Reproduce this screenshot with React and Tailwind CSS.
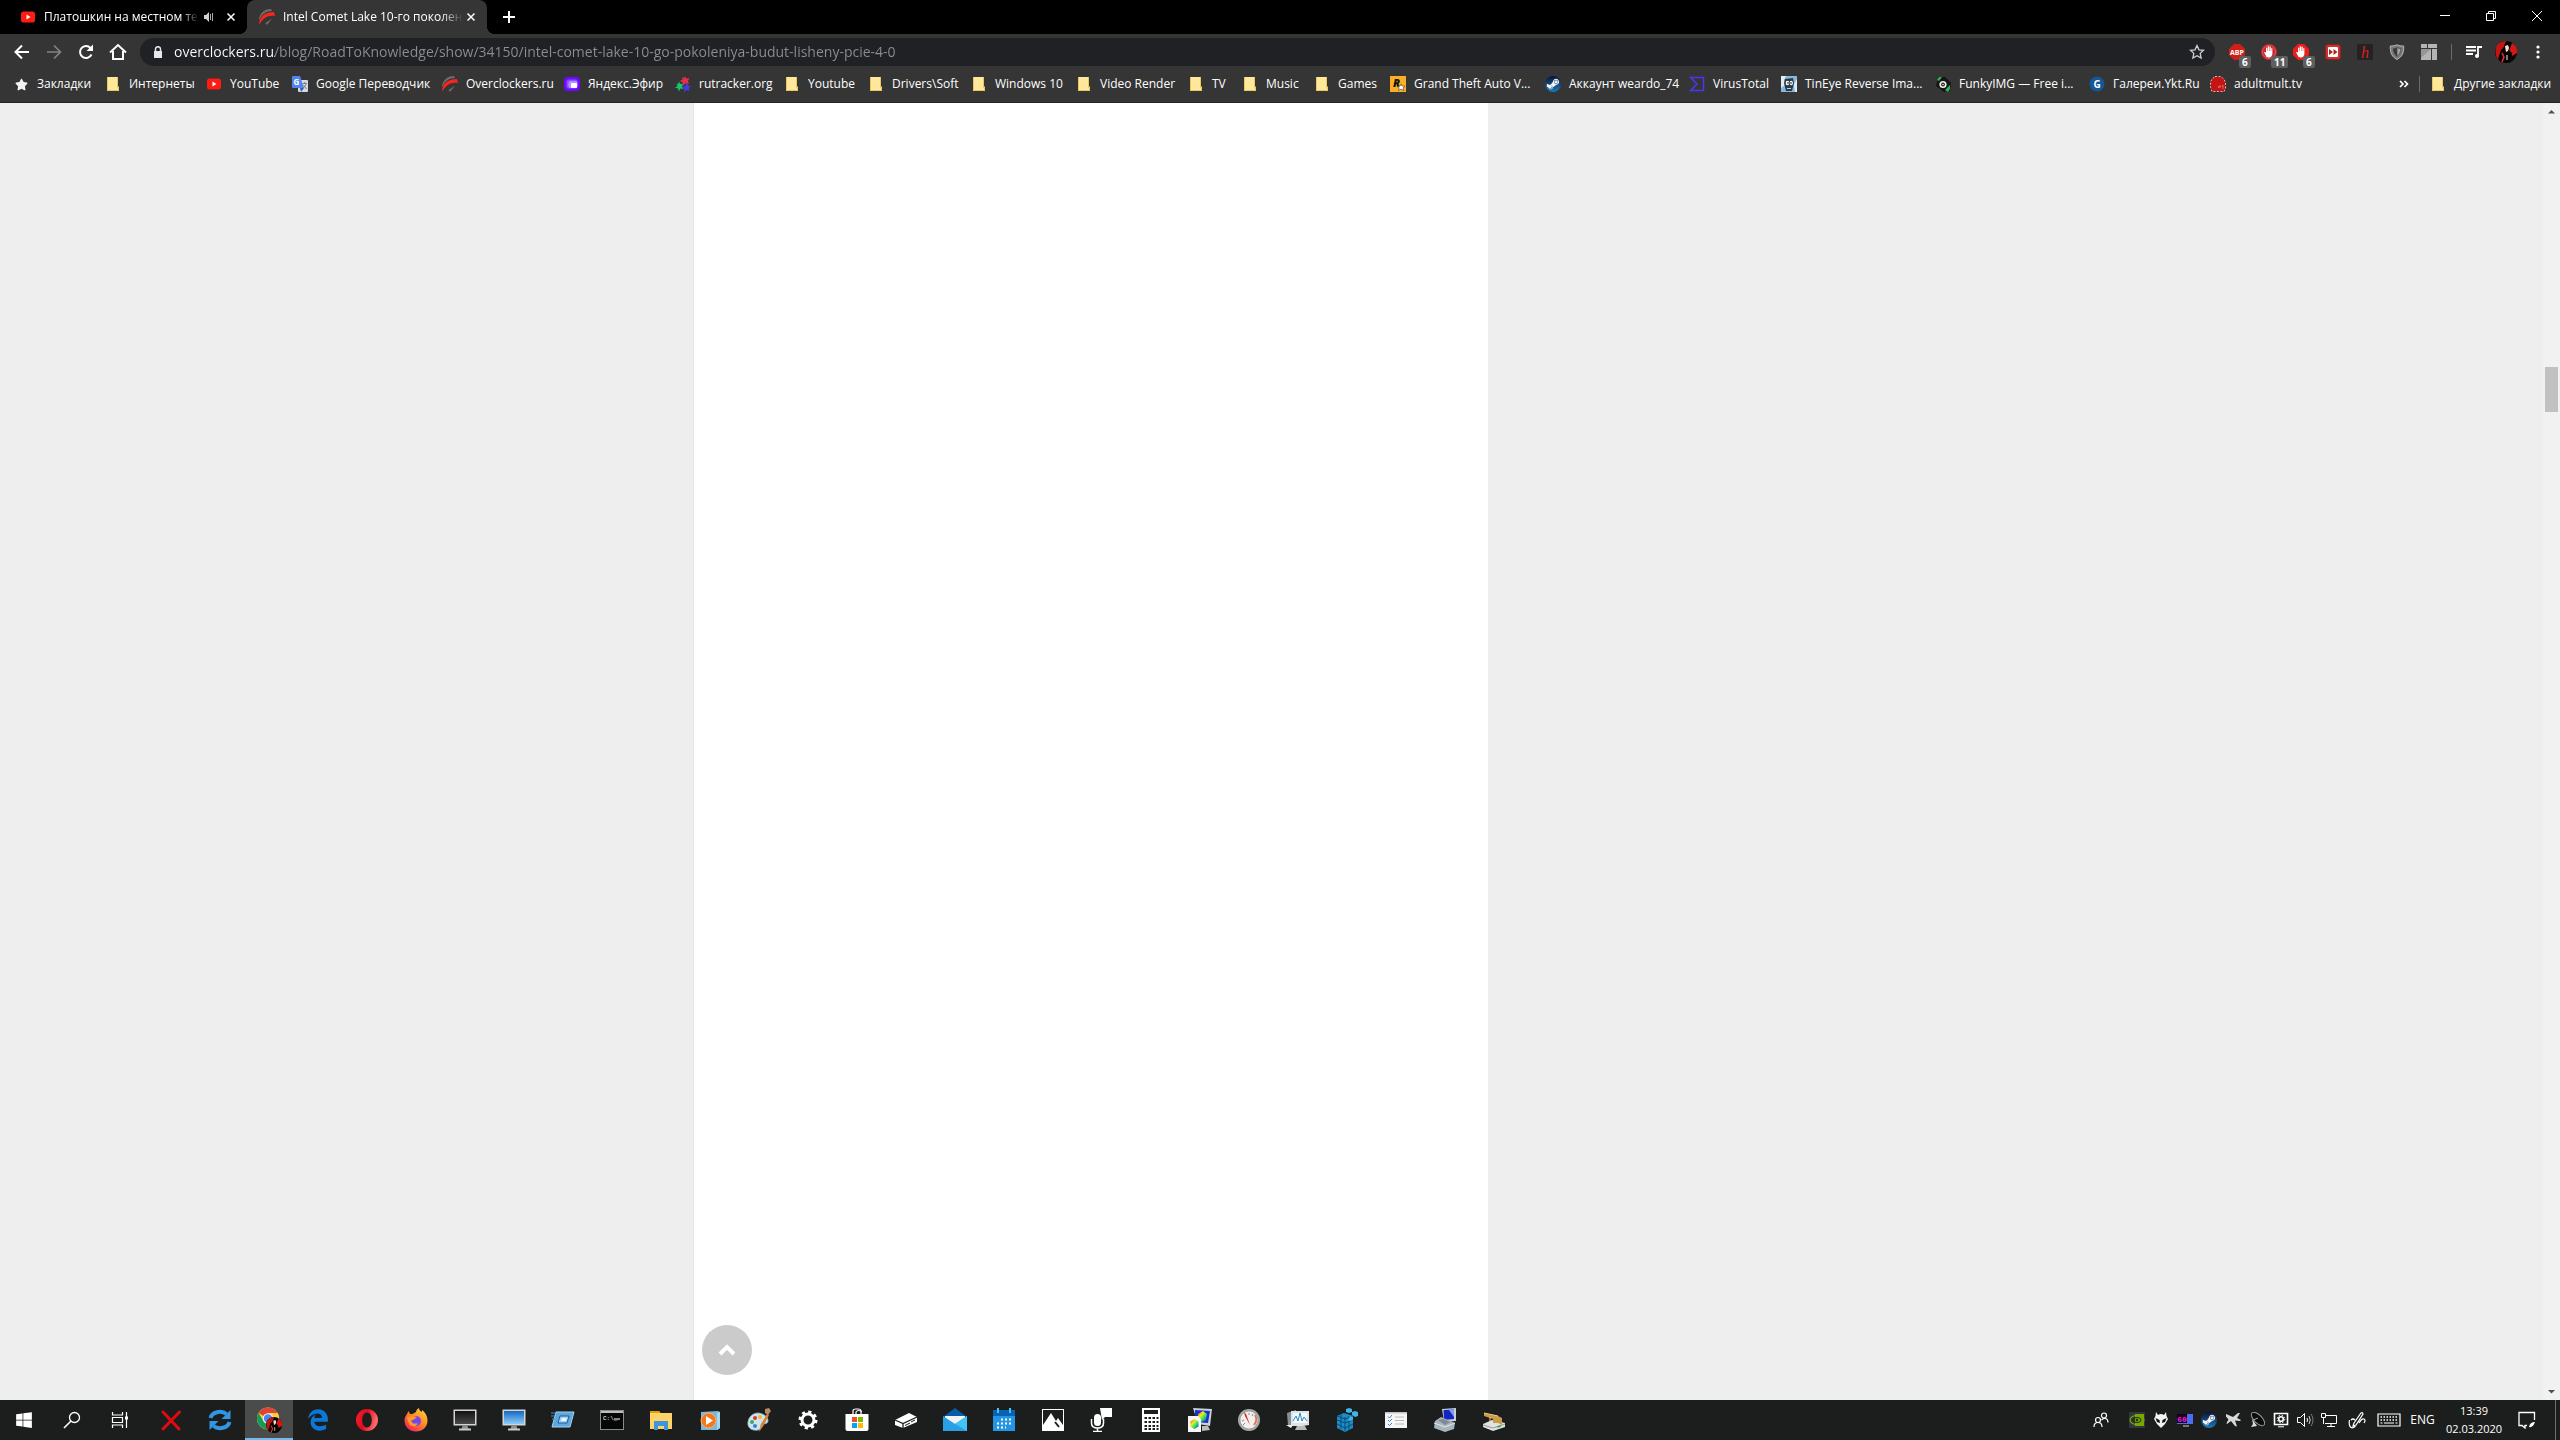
import React from "react";
import { FaEdgeLegacy, FaSteamSymbol, FaWindows, FaStar } from "react-icons/fa6";

const Svg = ({ s = 24, className = "", children, vb }) => (
  <svg width={s} height={s} viewBox={vb || `0 0 ${s} ${s}`} className={`shrink-0 ${className}`} fill="none" aria-hidden="true">
    {children}
  </svg>
);

/* ---------- favicons, 16px ---------- */
const YouTubeIcon = () => (
  <Svg s={16}>
    <rect x="1" y="2.500" width="14" height="11" rx="2.500" fill="#ff1a12" />
    <path d="M6.500 5.500v5l4-2.500z" fill="#fff" />
  </Svg>
);
const FolderIcon = () => (
  <Svg s={16}>
    <path d="M2 1h11v9l1 1v4H2z" fill="#ffe79b" />
    <path d="M2.500 1v13.500H13.500V11.500H12.500V1" stroke="#e9c85c" />
  </Svg>
);
const OverclockersIcon = () => (
  <Svg s={16}>
    <path d="M0 9C2 3 6 0 12 0l1 2C7 2 3 5 0 11z" fill="#6d6d6d" />
    <path d="M0 16C0 8 5 3 15 3l1 4C9 6 4 9 0 16z" fill="#f5261d" />
    <path d="M7 14l6-4.500-4 5z" fill="#777" />
    <circle cx="8" cy="14.300" r="1.300" fill="#666" />
  </Svg>
);
const GoogleTranslateIcon = () => (
  <Svg s={16}>
    <rect x="6" y="4" width="10" height="12" rx="1" fill="#d6d8db" />
    <path d="M1 0h7l4 12H1a1 1 0 01-1-1V1a1 1 0 011-1z" fill="#5185ec" />
    <path d="M8 12h4l-3 4z" fill="#3358bd" />
    <text x="1.500" y="9" fontSize="8" fontWeight="bold" fill="#fff" fontFamily="Open Sans">G</text>
    <path d="M10.500 7.500H15M12.700 6v1.500M14 8c-.5 2-1.500 3-3 4M11.500 9l3 4" stroke="#687a8c" strokeWidth=".9" />
  </Svg>
);
const YandexIcon = () => (
  <Svg s={16}>
    <rect x="0" y="1" width="16" height="14" rx="4" fill="#6c0bff" />
    <rect x="2.500" y="3.500" width="11" height="9" rx="2.500" fill="#8d4dff" />
    <rect x="4.500" y="5" width="9" height="7" rx="2" fill="#b68cff" />
    <rect x="7" y="7" width="6" height="5" rx="1" fill="#fff" />
  </Svg>
);
const RutrackerIcon = () => (
  <Svg s={16}>
    <path d="M10 0l1 2.500 3.500-.5-1.500 3 1 3-3.500-.5L8 9.500 7.500 6.500 5 5l2.500-1.500L7 1l2 1z" fill="#e0304a" />
    <path d="M4 5.500l1.500 2.500L8 8 7 10.500l1.500 2.500-3-.5L4 15.500 3 12.500 0 11.500 2.500 10 1.500 7.500 3.500 8z" fill="#15c66e" />
    <path d="M12.500 6.500l.7 2.700 2.800 1-2.200 1.800.7 3.300-2.700-1.300L9 16l.2-3.500L7 10.500l3-.5z" fill="#4b37e0" />
  </Svg>
);
const RockstarIcon = () => (
  <Svg s={16}>
    <rect width="16" height="16" fill="#fcaf24" />
    <text x="3" y="11" fontSize="11" fontWeight="900" fontStyle="italic" fill="#111" fontFamily="Open Sans">R</text>
    <path d="M11 8l1 2 3 .3-2 1.600.8 2.700-2.800-1.400-2.500 1.400.7-2.800L7 10.500l3-.3z" fill="#fff" stroke="#222" strokeWidth=".5" />
  </Svg>
);
const SteamIcon = () => (
  <span className="flex size-4 shrink-0 items-center justify-center rounded-full bg-linear-to-b from-[#0a1538] to-[#1b7cb8]">
    <FaSteamSymbol size={14} color="#f1f5f9" />
  </span>
);
const VirusTotalIcon = () => (
  <Svg s={16}>
    <path d="M1.500 1.500H14.500V14.500H1.500L8 8z" stroke="#4b36f5" strokeWidth="1.500" />
  </Svg>
);
const TinEyeIcon = () => (
  <Svg s={16}>
    <rect width="16" height="16" fill="#86b8d8" />
    <path d="M0 0h5L3 4 5 8 0 12zM16 3l-3 5 1 8h2z" fill="#e2edf2" />
    <path d="M4 3l8-1 1 5-2 8H5L3 7z" fill="#27394b" />
    <ellipse cx="6.500" cy="7" rx="1.800" ry="2.300" fill="#fff" />
    <ellipse cx="10.300" cy="7" rx="1.600" ry="2.300" fill="#fff" />
    <path d="M7 6v2M10 6v2" stroke="#111" />
    <path d="M6 12.500h4" stroke="#bcd3df" />
  </Svg>
);
const FunkyIcon = () => (
  <Svg s={16}>
    <path d="M3 1l7 0 6 6-1 8-6 1-8-6z" fill="#151515" />
    <path d="M2 4l2-3 3 0-3 4zM10 14l5-5v4l-2 3z" fill="#28b84d" />
    <circle cx="8" cy="8.500" r="3.600" fill="#eee" />
    <circle cx="8" cy="8.500" r="1.900" fill="#222" />
    <circle cx="8" cy="8.500" r=".8" fill="#eee" />
  </Svg>
);
const YktIcon = () => (
  <Svg s={16}>
    <circle cx="8" cy="8" r="7.500" fill="#125796" />
    <text x="8" y="11.500" fontSize="10" fontWeight="bold" fill="#fff" textAnchor="middle" fontFamily="Open Sans">G</text>
  </Svg>
);
const AdultIcon = () => (
  <Svg s={16}>
    <path d="M5 .5h6l3 3 1.500 3v6l-1.500 3H2L.5 11V6L2 3z" fill="#c41414" stroke="#e8dada" strokeWidth=".8" strokeDasharray="2 1.500" />
    <path d="M8 11h1M10 9.500v2M12 10h1.500M13 11.500v1" stroke="#f0baba" strokeWidth=".9" />
  </Svg>
);

const bookmarks = [
  ["Закладки", () => <FaStar size={13} className="mx-px shrink-0" color="#f1f3f4" />, "w-[91px]"],
  ["Интернеты", FolderIcon, "w-[101px]"],
  ["YouTube", YouTubeIcon, "w-[86px]"],
  ["Google Переводчик", GoogleTranslateIcon, "w-[150px]"],
  ["Overclockers.ru", OverclockersIcon, "w-[122px]"],
  ["Яндекс.Эфир", YandexIcon, "w-[111px]"],
  ["rutracker.org", RutrackerIcon, "w-[109px]"],
  ["Youtube", FolderIcon, "w-[84px]"],
  ["Drivers\\Soft", FolderIcon, "w-[103px]"],
  ["Windows 10", FolderIcon, "w-[105px]"],
  ["Video Render", FolderIcon, "w-[112px]"],
  ["TV", FolderIcon, "w-[54px]"],
  ["Music", FolderIcon, "w-[72px]"],
  ["Games", FolderIcon, "w-[76px]"],
  ["Grand Theft Auto V...", RockstarIcon, "w-[155px]"],
  ["Аккаунт weardo_74", SteamIcon, "w-[144px]"],
  ["VirusTotal", VirusTotalIcon, "w-[92px]"],
  ["TinEye Reverse Ima...", TinEyeIcon, "w-[154px]"],
  ["FunkyIMG — Free i...", FunkyIcon, "w-[154px]"],
  ["Галереи.Ykt.Ru", YktIcon, "w-[121px]"],
  ["adultmult.tv", AdultIcon, "w-[104px]"],
];

/* ---------- window chrome ---------- */
const CloseGlyph = ({ s = 8 }) => (
  <Svg s={s} vb="0 0 8 8"><path d="M.5 .5l7 7M7.500 .5l-7 7" stroke="#fff" strokeWidth="1.500" /></Svg>
);

const Tab = ({ icon: Icon, title, active, audio }) => (
  <div className={`relative flex h-full items-center pr-2 pl-3 ${active ? "w-60 rounded-t-lg bg-[#353535]" : "w-[239px]"}`}>
    {active && (
      <>
        <span className="absolute -left-2 bottom-0 size-2 bg-[radial-gradient(circle_at_0_0,transparent_8px,#353535_8px)]" />
        <span className="absolute -right-2 bottom-0 size-2 bg-[radial-gradient(circle_at_100%_0,transparent_8px,#353535_8px)]" />
      </>
    )}
    <Icon />
    <span className="ml-2 min-w-0 flex-1 overflow-hidden whitespace-nowrap [mask-image:linear-gradient(90deg,#000_88%,transparent)]">{title}</span>
    {audio && (
      <Svg s={12} className="ml-1 mr-2">
        <path d="M1 4h2l3-3v10L3 8H1z" fill="#d0d0d0" />
        <path d="M7.500 3v6M9.500 2v8" stroke="#aaa" />
      </Svg>
    )}
    <button aria-label="Закрыть вкладку" className="flex size-4 items-center justify-center"><CloseGlyph /></button>
  </div>
);

const IconButton = ({ label, children, className = "w-8" }) => (
  <button aria-label={label} className={`flex h-8 shrink-0 items-center justify-center ${className}`}>{children}</button>
);

const Badge = ({ children }) => (
  <span className="absolute -bottom-2 left-2.5 rounded-xs bg-[#5d5f61] px-[3px] text-[10px] leading-3 font-bold text-white">{children}</span>
);

const Octagon = ({ fill }) => <path d="M5 0h6l5 5v6l-5 5H5l-5-5V5z" fill={fill} />;
const Hand = () => <path d="M5 8V4q.7-1 1.300 0V7h.4V2.500q.7-1 1.400 0V7h.4V3q.7-1 1.300 0v4h.4V4.500q.7-1 1.200 0V10q-.5 3.500-3.500 3.500T4.500 11L3 8.500q.8-1 1.500 0z" fill="#fff" />;

const AvatarArt = () => (
  <>
    <circle cx="11" cy="11" r="11" fill="#080404" />
    <path d="M1 6C3 2 7 0 11 0L9 5 8 12 4 20Q-1 14 1 6z" fill="#c0160f" />
    <path d="M17 2q6 4 5 10l-5 3-3-5z" fill="#d21a12" />
    <path d="M10 5l3-1 1 3-1 3-2 1z" fill="#f1ded8" />
    <path d="M6 9l3-3 1 6-4 9-3-3zM14 9l3 3-1 9-5 1-1-7z" fill="#080404" />
    <path d="M7 12l2 4-2 5" stroke="#e9322a" strokeWidth="1.500" />
    <path d="M12 14v5" stroke="#eee" />
  </>
);

const extensions = [
  ["Adblock Plus", <><Octagon fill="#cf1f17" /><text x="8" y="11" fontSize="7" fontWeight="bold" fill="#fff" textAnchor="middle" fontFamily="Open Sans">ABP</text></>, "6"],
  ["Блокировщик", <><circle cx="8" cy="8" r="8" fill="#c9262d" /><circle cx="8" cy="8" r="6.500" stroke="#e06a6e" strokeWidth=".7" /><Hand /></>, "11"],
  ["AdBlock", <><Octagon fill="#f01c1c" /><Hand /></>, "6"],
  ["Перемотка", <><rect x=".5" y=".5" width="15" height="15" rx="2.500" fill="#c9322e" stroke="#8e2020" /><rect x="3" y="3" width="10" height="10" rx="1" fill="#fff" /><path d="M4 5l4 3-4 3zM8.500 5l4 3-4 3z" fill="#b31f1c" /></>],
  ["h", <><rect width="16" height="16" rx="1" fill="#232323" /><text x="8" y="13.500" fontSize="16" fontStyle="italic" fill="#d8201c" textAnchor="middle" fontFamily="Liberation Serif">h</text></>],
  ["Защита", <><path d="M8 .8C5.500 2 3 2 1.300 2 1 9 3 13 8 15.400 13 13 15 9 14.700 2 13 2 10.500 2 8 .8z" fill="#77797b" stroke="#b7b9bb" /><path d="M4 4.500q2.500 0 4-1v9Q4 9.500 4 4.500z" fill="#3a3a3a" /><path d="M8 3.500q1.500 1 4 1 0 5-4 8z" fill="#a5a7a9" stroke="#444" strokeWidth=".7" /></>],
  ["Панель", <><path d="M0 0h6v4H0zM7 0h9v4H7zM0 5h10v11H0zM11 5h5v11h-5z" fill="#b4b4b4" /><path d="M10 5L0 14V5z" fill="#969696" /></>],
];

/* ---------- taskbar icons, 24px ---------- */
const Monitor = ({ a, b, id }) => (
  <Svg>
    <defs><linearGradient id={id} x1="0" y1="0" x2="0" y2="1"><stop stopColor={a} /><stop offset="1" stopColor={b} /></linearGradient></defs>
    <rect x=".5" y="1.500" width="23" height="16" fill="#d4d4d4" />
    <rect x="2" y="3" width="20" height="13" fill={`url(#${id})`} />
    <path d="M9.500 17.500h5l1 3.500h-7z" fill="#8e8e8e" /><path d="M6 20.500h12v2H6z" fill="#c9c9c9" />
  </Svg>
);

const taskbar = [
  ["Закрыть", <Svg><path d="M4 4l16 17M20.500 4L4 21" stroke="#e20a12" strokeWidth="3" strokeLinecap="round" /></Svg>],
  ["Обновить", <Svg><path d="M2.500 10A9.500 7.500 0 0118.500 6" stroke="#3196e4" strokeWidth="4" /><path d="M22.500 2v9h-9z" fill="#3196e4" /><path d="M21.500 14a9.500 7.500 0 01-16 4" stroke="#3196e4" strokeWidth="4" /><path d="M1.500 22v-9h9z" fill="#3196e4" /></Svg>],
  ["Chrome", (
    <Svg s={28}>
      <circle cx="13" cy="13.500" r="11" fill="#ffcd40" />
      <path d="M13 13.500L3.500 8A11 11 0 0122.600 8H13z" fill="#dc4437" />
      <path d="M3.500 8A11 11 0 0013 24.500L17 16 8.500 16z" fill="#149c57" />
      <path d="M22.600 8H13l4.800 8.200L13 24.500A11 11 0 0022.600 8z" fill="#ffcd40" />
      <circle cx="13" cy="13.500" r="5.300" fill="#f3f3f3" /><circle cx="13" cy="13.500" r="4.200" fill="#4788f0" />
      <g transform="translate(11 12) scale(.73)"><AvatarArt /></g>
    </Svg>
  )],
  ["Edge", <FaEdgeLegacy size={22} color="#0a78d6" />],
  ["Opera", (
    <Svg>
      <defs><linearGradient id="op" x1="0" y1="0" x2="1" y2=".3"><stop stopColor="#ff1b2d" /><stop offset=".5" stopColor="#e00c20" /><stop offset="1" stopColor="#ff6a6a" /></linearGradient></defs>
      <path fillRule="evenodd" d="M12 1a11 11 0 100 22 11 11 0 000-22zm0 3.500c2.900 0 4.800 3.300 4.800 7.500s-1.900 7.500-4.800 7.500S7.200 16.200 7.200 12 9.100 4.500 12 4.500z" fill="url(#op)" />
    </Svg>
  )],
  ["Firefox", (
    <Svg>
      <defs><linearGradient id="fx" x1="1" y1="0" x2=".2" y2="1"><stop stopColor="#ffe14a" /><stop offset=".5" stopColor="#ff8a22" /><stop offset="1" stopColor="#f21d63" /></linearGradient></defs>
      <path d="M3 6l1.500-3L6 6l2.500 0L12 4c0-2 1.500-3 3-4 0 2 1 3 3 4 0-1 0-1-.2-2C21 4 23.500 8 23.500 12.500 23.500 19 18.500 23.500 12 23.500S.5 19 .5 12.500C.5 10 1.500 8 3 6z" fill="url(#fx)" />
      <circle cx="12" cy="13" r="5" fill="#7647e8" /><path d="M3 9l6-1 4 1-3 2.500-3 1 2 3 5 0-3 3-5-1-2-4z" fill="#ff9a27" />
    </Svg>
  )],
  ["Компьютер", <Monitor a="#111" b="#4a4a4a" id="m1" />],
  ["Рабочий стол", <Monitor a="#1468c0" b="#8ccbfa" id="m2" />],
  ["Выполнить", <Svg><path d="M5 4h18l-4 15H1z" fill="#5ea6de" stroke="#a5d4f4" /><path d="M9 8h9l-2 7H7z" fill="#9bd0f5" stroke="#205b9b" /><path d="M11 10h5l-1 3h-5z" fill="#e8f6ff" /><path d="M0 5h5M0 8h4M1 11h3" stroke="#4e8cb9" /></Svg>],
  ["Командная строка", <Svg><rect x=".5" y="2.500" width="23" height="19" fill="#060606" stroke="#8a8a8a" /><path d="M1 4h22" stroke="#bdbdbd" strokeWidth="2" /><text x="3" y="12" fontSize="6" fill="#fff" fontFamily="Liberation Mono">C:\_</text><path d="M14 11h6" stroke="#fff" /></Svg>],
  ["Проводник", <Svg><path d="M1 3h9l1.500 2H23v16H1z" fill="#ffd366" /><path d="M1 3h9l1 2H1z" fill="#e3a008" /><path d="M5 13h14v9h-4v-4H9v4H5z" fill="#3f95dc" /></Svg>],
  ["Медиаплеер", <Svg><path d="M3 4l17-1 2 1v16l-3 2H3z" fill="#76b9dc" /><path d="M19 5l3-1v16l-3 2z" fill="#a9d8ec" /><circle cx="10.500" cy="12.500" r="7.500" fill="#f3771d" stroke="#f7b47c" /><path d="M8 8v9l7-4.500z" fill="#fff" /></Svg>],
  ["Paint", <Svg><path d="M1 14C2 7 9 3 15 6c4 1 8 6 5 9-2 2-5-1-6 1 0 2 1 5-3 6C5 23 0 20 1 14z" fill="#cfe4f3" stroke="#8db7d1" strokeWidth=".8" /><circle cx="5" cy="14" r="2" fill="#41a94a" /><circle cx="8" cy="10" r="2" fill="#e2342c" /><circle cx="13" cy="9" r="2" fill="#f3b92c" /><circle cx="8" cy="18" r="2" fill="#3684cf" /><path d="M12 24l2-8 6-10 2 1-5 10z" fill="#d98435" /><path d="M18 1l4-1 2 3-3 4-3-2z" fill="#b98b62" /></Svg>],
  ["Параметры", <Svg><circle cx="12" cy="12" r="6" stroke="#fff" strokeWidth="3" /><circle cx="12" cy="12" r="8" stroke="#fff" strokeWidth="3" strokeDasharray="3.100 3.180" /></Svg>],
  ["Microsoft Store", <Svg><path d="M.5 6h23v15q0 2-2 2H2.500q-2 0-2-2z" fill="#fff" /><path d="M8 6V3q0-2 3-2h2q3 0 3 2v3M11 6V4q2-3 6 0" stroke="#fff" strokeWidth="1.200" /><path d="M7 9h5v5H7z" fill="#f25022" /><path d="M13 9h5v5h-5z" fill="#7fba00" /><path d="M7 15h5v5H7z" fill="#00a4ef" /><path d="M13 15h5v5h-5z" fill="#ffb900" /></Svg>],
  ["Диск", <Svg><path d="M1 12L15 5l8 4v5L9 20l-8-3z" fill="#fff" /><path d="M1 12l8 3.500L23 9M9 15.500V20" stroke="#1c1e1d" strokeWidth="1.300" /><path d="M11 17.500l5-2.500M17 14l4-2" stroke="#1c1e1d" /></Svg>],
  ["Почта", <Svg><path d="M0 9l12-9 12 9z" fill="#0a5aa9" /><path d="M2 8h20v8H2z" fill="#f1f4f6" /><path d="M0 8l12 8L24 8v15H0z" fill="#2a9fe6" /><path d="M24 8v15L9 14l3 2z" fill="#40c4f5" /></Svg>],
  ["Календарь", <Svg><path d="M1 2h22v21H1z" fill="#2296e3" /><path d="M1 2h22v6H1z" fill="#0c62b2" /><path d="M6 0v5M18 0v5" stroke="#43c6ee" strokeWidth="2" /><path d="M9 11.500h12M5 15.500h16M5 19.500h9" stroke="#fff" strokeWidth="2" strokeDasharray="2 2" /></Svg>],
  ["Фотографии", <Svg><path d="M1 1h22v22H1z" fill="#fff" /><path d="M2 2h20v15l-5-7-2 3-5-8-8 12z" fill="#1c1e1d" /><path d="M14 14l4 5" stroke="#1c1e1d" strokeWidth="2" /></Svg>],
  ["Диктофон", <Svg><rect x="4" y="6" width="7" height="12" rx="3.500" fill="#fff" /><path d="M1.500 11v4q0 5 6 5t6-5v-4M7.500 20v3M3 23.500h9" stroke="#fff" strokeWidth="1.500" /><path d="M10 0h12v9h-7l-3 3z" fill="#fff" /></Svg>],
  ["Калькулятор", <Svg><path d="M3 0h18v24H3z" fill="#fff" /><path d="M5 2h14v4H5z" fill="#1c1e1d" /><path d="M5.500 10h14M5.500 14h14M5.500 18h14M5.500 21h14" stroke="#1c1e1d" strokeWidth="1.800" strokeDasharray="2.500 1.500" /></Svg>],
  ["Цвет экрана", (
    <Svg>
      <defs><linearGradient id="rb" x1="0" y1="0" x2="1" y2="1"><stop stopColor="#f22" /><stop offset=".35" stopColor="#ee2" /><stop offset=".65" stopColor="#2d6" /><stop offset="1" stopColor="#22f" /></linearGradient></defs>
      <path d="M5 0l19 1-2 17-12-2z" fill="#c8d0da" /><path d="M7 2l15 1-2 12-13-1z" fill="#1c2fc8" /><path d="M15 3l4 3-1 6-4 2-4-3V6z" fill="url(#rb)" />
      <path d="M14 18h6l2 4-8 1z" fill="#bcbcbc" /><path d="M0 8h10l3 3v13H0z" fill="#f6f6f6" /><path d="M6.500 11l4 2.500v5L6.500 21l-4-2.500v-5z" fill="url(#rb)" />
    </Svg>
  )],
  ["Производительность", <Svg><circle cx="12" cy="12" r="11" fill="#a9a9a9" /><circle cx="12" cy="12" r="9" fill="#f2efec" stroke="#777" strokeWidth=".5" /><path d="M7 4l2 2 4 11-5-9z" fill="#cc241c" /><path d="M18 7q3 5-1 10" stroke="#d87a5b" strokeWidth="2" /><path d="M5 13l2-1M6 17l2-2M12 5v2M16 6l-1 2" stroke="#888" /></Svg>],
  ["Монитор ресурсов", <Svg><path d="M1 5l9-3v16H2z" fill="#8a8f92" /><path d="M5 3h18v14l-6 1H5z" fill="#dfe3e5" /><path d="M7 5h14v10H7z" fill="#f2f9fc" /><path d="M7 13l3-5 2 5 2-8 2 8 2-4 3 4" stroke="#2e87c4" /><path d="M11 18h8l2 4H9z" fill="#b6b9bb" /><path d="M0 17h7l-2 3z" fill="#eee" /></Svg>],
  ["Реестр", <Svg><path d="M2 8l7-3 9 3v12l-8 4-8-4z" fill="#1b8dc7" /><path d="M2 12l8 3 8-3M2 16l8 4 8-4M6 7v14M10 9v14M14 8v14M2 8l8 3 8-3" stroke="#0c4b77" /><path d="M14 0l3 1v3l-3 1-3-1V1zM20 3l3 1v4l-3 1-3-2V4zM15 8l3 1v3l-3 1-2-1z" fill="#3fb6e8" /></Svg>],
  ["Службы", <Svg><path d="M1 4h22v16H1z" fill="#f5f5f5" /><path d="M1 4h22v1.500H1z" fill="#c3c3c3" /><path d="M11 9h9M11 12.500h9M11 16h9" stroke="#b7bbc0" /><path d="M4 8.500l1.500 1.500L8 7M4 12l1.500 1.500L8 11M4 16l1.500 1.500L8 15" stroke="#3b85c4" /></Svg>],
  ["Удалённый стол", <Svg><path d="M9 1l14-1v13l-12 1z" fill="#ccd0d4" /><path d="M10.500 2L21 1.500V11l-10 1z" fill="#1426c8" /><path d="M16 2l5-.5V9z" fill="#7ba0ee" /><path d="M2 13l6-4 14 6-1 6-9 3-11-4z" fill="#aab4bc" /><path d="M1 15l11 4 10-4" stroke="#e2e8ec" /><path d="M5 12l6-1 6 3-5 3z" fill="#7f8a94" /></Svg>],
  ["Очистка диска", <Svg><path d="M1 16l9-4 13 3v4l-12 4L1 19z" fill="#e2e2e2" /><path d="M1 17l10 3 12-4" stroke="#999" /><path d="M2 5l14 3 4 2v7l-4-2-5 0V11L2 8z" fill="#c99a4b" /><path d="M2 5l14 3M8 9v5" stroke="#f0cf86" /><path d="M15 19l4-1" stroke="#35b23c" strokeWidth="1.500" /></Svg>],
];

/* ---------- tray ---------- */
const tray = [
  ["NVIDIA", <Svg s={16}><path d="M0 0h16v16H0z" fill="#31363f" /><path d="M6 2h9v12H6z" fill="#76a800" /><ellipse cx="8" cy="8" rx="7" ry="4.500" stroke="#76a800" strokeWidth="1.200" /><ellipse cx="8" cy="8" rx="4" ry="2.500" stroke="#223010" /><circle cx="8" cy="8" r="1.200" fill="#223010" /></Svg>],
  ["foobar2000", <Svg s={16}><path d="M3 0l2 3q3-2 6 0l2-3 .5 4 1.500 3-3 5-4 4-4-4-3-5 1.500-3z" fill="#f4f4f4" /><path d="M2.500 6l4 2 .5 3-3-1zM13.500 6l-4 2-.5 3 3-1z" fill="#111" /></Svg>],
  ["Частота кадров", <Svg s={16}><path d="M0 2h16v10H0z" fill="#4b6cf5" /><path d="M0 2h10v9H0z" fill="#180018" /><text x="5" y="9.500" fontSize="8" fontWeight="bold" fill="#ff1fe0" textAnchor="middle" fontFamily="Liberation Mono">60</text><path d="M6 14h6" stroke="#777" strokeWidth="2" /></Svg>],
  ["Steam", <SteamIcon />],
  ["Самолёт", <Svg s={16}><path d="M1 2l7 3 5-4 2 0-3 5 4 2-1 1-5-.5 2 6-2-.5-4-5-4 3-.5-1 2-3.500-2.500-3z" fill="#d9d9d9" /></Svg>],
  ["Антенна", <Svg s={16}><ellipse cx="9" cy="7" rx="4" ry="8.500" transform="rotate(-45 9 7)" fill="#0c0c0c" stroke="#9a9a9a" /><path d="M3 7l5 7-6 1 2-3z" fill="#ddd" /><path d="M4 8l5-2" stroke="#aaa" /></Svg>],
  ["Графика", <Svg s={16}><path d="M1.500 1.500h13v11h-13z" stroke="#fff" strokeWidth="1.600" /><circle cx="8" cy="7" r="2.300" stroke="#fff" strokeWidth="1.600" /><circle cx="8" cy="7" r="3.800" stroke="#fff" strokeDasharray="1.500 1.500" /><path d="M5 14.800h6" stroke="#fff" /></Svg>],
  ["Громкость", <Svg s={18}><path d="M1.500 6.500h3l4-4v13l-4-4h-3z" stroke="#fff" /><path d="M11 7q1 2 0 4" stroke="#fff" /><path d="M13 5q2.500 4 0 8" stroke="#ccc" /><path d="M15 3q4 6 0 12" stroke="#777" /></Svg>],
  ["Сеть", <Svg s={16}><path d="M4.500 3.500h11v8H4M10 11.500V15M6 14.500h8" stroke="#fff" /><path d="M.5 1.500h4v4h-4zM2.500 5.500V12" stroke="#fff" /></Svg>],
];

export default function App() {
  return (
    <div className="flex h-screen flex-col overflow-hidden bg-[#eeeeee] font-['Open_Sans','Noto_Sans',sans-serif] text-xs text-white">
      <header className="shrink-0 border-b border-[#232327] bg-[#353535]">
        <div className="flex h-[34px] items-stretch bg-black pl-2">
          <Tab icon={YouTubeIcon} title="Платошкин на местном теле" audio />
          <Tab icon={OverclockersIcon} title="Intel Comet Lake 10-го поколени" active />
          <button aria-label="Новая вкладка" className="ml-2 flex w-7 items-center justify-center">
            <Svg s={12}><path d="M6 0v12M0 6h12" stroke="#fff" strokeWidth="2" /></Svg>
          </button>
          <div className="ml-auto flex h-7">
            <IconButton label="Свернуть" className="w-[46px]"><Svg s={10}><path d="M0 4.500h10" stroke="#fff" /></Svg></IconButton>
            <IconButton label="Восстановить" className="w-[46px]"><Svg s={10}><path d="M.5 2.500h7v7h-7zM2.500 2.500v-2h7v7h-2" stroke="#fff" /></Svg></IconButton>
            <IconButton label="Закрыть" className="w-[46px]"><Svg s={10}><path d="M0 0l10 10M10 0L0 10" stroke="#fff" /></Svg></IconButton>
          </div>
        </div>

        <div className="flex h-9 items-center px-1.5">
          <IconButton label="Назад"><Svg s={16}><path d="M15 8H2M8 1.500L1.500 8 8 14.500" stroke="#fff" strokeWidth="2" /></Svg></IconButton>
          <IconButton label="Вперёд"><Svg s={16}><path d="M1 8h13M8 1.500L14.500 8 8 14.500" stroke="#828282" strokeWidth="1.700" /></Svg></IconButton>
          <IconButton label="Обновить страницу"><Svg s={16}><path d="M13.500 10.500A6 6 0 1112.500 4" stroke="#fff" strokeWidth="2" /><path d="M15 .5V7H8.500z" fill="#fff" /></Svg></IconButton>
          <IconButton label="Домой"><Svg s={18}><path d="M1 9.500L9 2l8 7.500M4 8v8h10V8" stroke="#fff" strokeWidth="2" /></Svg></IconButton>
          <div className="ml-1.5 flex h-7 flex-1 items-center rounded-full bg-[#202124] pr-2.5 pl-3">
            <Svg s={12}><path d="M2 5h8v7H2z" fill="#e8e8e8" /><path d="M3.500 5V3q0-2.300 2.500-2.300T8.500 3v2" stroke="#e8e8e8" strokeWidth="1.500" /></Svg>
            <input
              aria-label="Адресная строка"
              readOnly
              value="overclockers.ru/blog/RoadToKnowledge/show/34150/intel-comet-lake-10-go-pokoleniya-budut-lisheny-pcie-4-0"
              className="ml-2.5 min-w-0 flex-1 bg-[linear-gradient(90deg,#fff_101px,#8b8e92_101px)] bg-clip-text text-sm leading-5 text-transparent outline-none"
            />
            <button aria-label="Добавить в закладки"><Svg s={16}><path d="M8 1.500l2 4.300 4.500.5-3.300 3.100.9 4.600L8 11.700 3.900 14l.9-4.600L1.500 6.300 6 5.800z" stroke="#d0d0d0" strokeWidth="1.300" /></Svg></button>
          </div>
          <div className="ml-1.5 flex">
            {extensions.map(([name, art, badge]) => (
              <IconButton key={name} label={name}>
                <span className="relative"><Svg s={16}>{art}</Svg>{badge && <Badge>{badge}</Badge>}</span>
              </IconButton>
            ))}
          </div>
          <span className="mx-1.5 h-4 w-px bg-[#6c6c6c]" />
          <IconButton label="Медиа"><Svg s={16}><path d="M0 3h10M0 6.500h10M0 10h7M12 12V3h4" stroke="#fff" strokeWidth="1.800" /><circle cx="11" cy="12" r="2" fill="#fff" /></Svg></IconButton>
          <IconButton label="Профиль"><Svg s={22}><AvatarArt /></Svg></IconButton>
          <IconButton label="Меню"><Svg s={16}><circle cx="8" cy="3" r="1.600" fill="#fff" /><circle cx="8" cy="8" r="1.600" fill="#fff" /><circle cx="8" cy="13" r="1.600" fill="#fff" /></Svg></IconButton>
        </div>

        <nav aria-label="Закладки" className="flex h-8 items-center px-3.5 pb-1">
          {bookmarks.map(([name, Icon, width], i) => (
            <a key={i} href="#" className={`flex shrink-0 items-center gap-2 whitespace-nowrap ${width}`}>
              <Icon />{name}
            </a>
          ))}
          <button aria-label="Ещё закладки" className="ml-auto"><Svg s={10}><path d="M1 2l3 3-3 3M5.500 2l3 3-3 3" stroke="#fff" strokeWidth="1.700" /></Svg></button>
          <span className="mx-2.5 h-4 w-px bg-[#6c6c6c]" />
          <a href="#" className="flex w-[116px] items-center gap-2 whitespace-nowrap"><FolderIcon />Другие закладки</a>
        </nav>
      </header>

      <div className="flex min-h-0 flex-1">
        <main className="flex min-w-0 flex-1 justify-center">
          <div className="flex w-full max-w-[1157px]">
            <article className="flex w-[795px] items-end border-l border-[#e6e6e6] bg-white pb-[25px] pl-2">
              <button aria-label="Наверх" className="flex size-[50px] items-center justify-center rounded-full bg-[#cbcbcb]">
                <Svg s={18}><path d="M2 13l7-7 7 7" stroke="#fff" strokeWidth="4" /></Svg>
              </button>
            </article>
          </div>
        </main>
        <div className="flex w-[17px] shrink-0 flex-col items-center bg-[#f1f1f1]">
          <button aria-label="Прокрутить вверх" className="flex h-[17px] items-center"><Svg s={7}><path d="M0 5.500L3.500 2 7 5.500z" fill="#505050" /></Svg></button>
          <span className="flex-[247]" />
          <span className="h-[45px] w-[13px] bg-[#c1c1c1]" />
          <span className="flex-[971]" />
          <button aria-label="Прокрутить вниз" className="flex h-[17px] items-center"><Svg s={7}><path d="M0 2l3.500 3.500L7 2z" fill="#505050" /></Svg></button>
        </div>
      </div>

      <footer className="flex h-10 shrink-0 items-stretch bg-[#1c1e1d]">
        <button aria-label="Пуск" className="flex w-12 items-center justify-center"><FaWindows size={18} /></button>
        <button aria-label="Поиск" className="flex w-12 items-center justify-center"><Svg s={18}><circle cx="11.500" cy="6.500" r="5" stroke="#fff" strokeWidth="1.300" /><path d="M8 10L1 17" stroke="#fff" strokeWidth="1.600" /></Svg></button>
        <button aria-label="Представление задач" className="flex w-12 items-center justify-center"><Svg s={18}><path d="M1.500 1v3h10V1M1.500 17v-3h10v3M1.500 6.500h10v5h-10zM15.500 1v16" stroke="#fff" strokeWidth="1.200" /><path d="M14 5.500h3v3h-3z" fill="#fff" /></Svg></button>
        <div className="ml-[3px] flex gap-px">
          {taskbar.map(([name, icon]) => (
            <button key={name} aria-label={name} className={`flex w-12 items-center justify-center ${name === "Chrome" ? "border-b-2 border-[#76b9ed] bg-[#4a4c4b]" : ""}`}>{icon}</button>
          ))}
        </div>
        <div className="ml-auto flex items-center">
          <button aria-label="Люди" className="mr-3 flex w-6 justify-center"><Svg s={16}><circle cx="5" cy="8" r="2.500" stroke="#fff" strokeWidth="1.200" /><path d="M1 15q0-4.500 4-4.500T9 15" stroke="#fff" strokeWidth="1.200" /><circle cx="11" cy="3.500" r="2.500" stroke="#fff" strokeWidth="1.200" /><path d="M8.500 8q2-2 4-1.500Q15 7 15 10.500" stroke="#fff" strokeWidth="1.200" /></Svg></button>
          {tray.map(([name, icon]) => (
            <button key={name} aria-label={name} className="flex w-6 items-center justify-center">{icon}</button>
          ))}
          <button aria-label="Ручка" className="flex w-8 justify-center"><Svg s={18}><path d="M6 12L13 2q2-1 2 1L8 14l-3 1zM1.500 9q-1 5 1 7t5-1M11 12q3-5 5-4t0 4M3 9q2-2 4 0" stroke="#fff" strokeWidth="1.200" /></Svg></button>
          <button aria-label="Клавиатура" className="flex w-8 justify-center"><Svg s={24}><path d="M1 6h22v12H1z" stroke="#fff" strokeWidth="1.200" /><path d="M3.500 9h17M3.500 12h17" stroke="#fff" strokeWidth="1.500" strokeDasharray="1.500 1.500" /><path d="M3.500 15h2M7 15h10M18.500 15h2" stroke="#fff" /></Svg></button>
          <button className="w-[35px] text-center">ENG</button>
          <button className="flex w-[68px] flex-col items-center text-[11px] leading-[18px]"><span>13:39</span><span>02.03.2020</span></button>
          <button aria-label="Уведомления" className="flex w-[38px] justify-center"><Svg s={18}><path d="M9 14.500H7v2.500l-3-2.500H1V1.500h15.500V9" stroke="#fff" strokeWidth="1.300" /><path d="M11 16q4 1 6-5-5 0-6 5z" fill="#fff" /></Svg></button>
          <span className="mr-1 ml-[9px] h-10 w-px bg-[#6b6d6c]" />
        </div>
      </footer>
    </div>
  );
}
